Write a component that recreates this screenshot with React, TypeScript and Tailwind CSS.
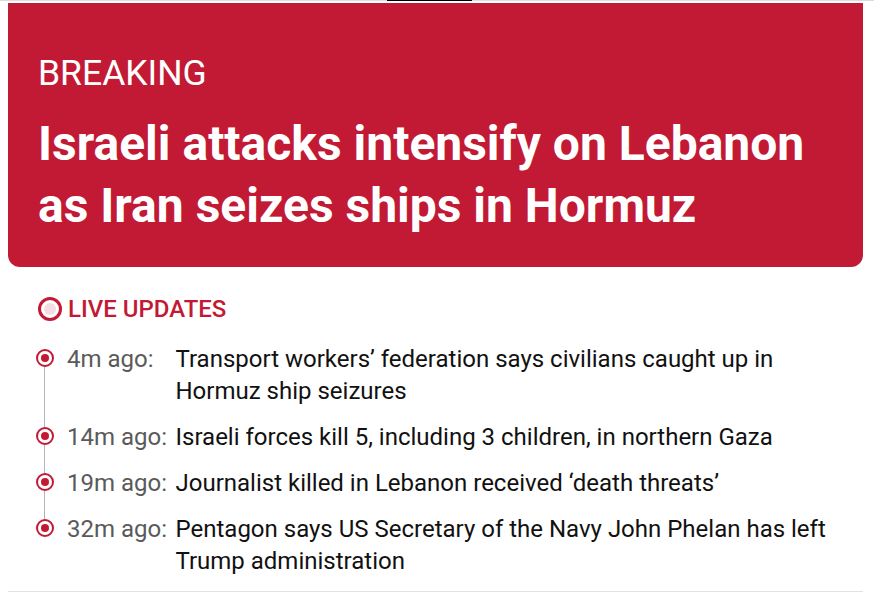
const updates = [
  {
    time: "4m ago:",
    text: "Transport workers’ federation says civilians caught up in Hormuz ship seizures",
  },
  { time: "14m ago:", text: "Israeli forces kill 5, including 3 children, in northern Gaza" },
  { time: "19m ago:", text: "Journalist killed in Lebanon received ‘death threats’" },
  {
    time: "32m ago:",
    text: "Pentagon says US Secretary of the Navy John Phelan has left Trump administration",
  },
];

export default function App() {
  return (
    <div className="min-h-screen bg-white font-['Roboto',sans-serif]">
      {/* top rule */}
      <div className="h-px bg-[#dcdcdc]">
        <div className="ml-[387px] h-px w-[85px] bg-black" />
      </div>

      <div className="ml-2 w-[855px]">
        {/* Breaking banner */}
        <div className="mt-[2px] rounded-b-[12px] bg-[#c21a34] pl-[30px] pr-6 pt-[49px] pb-[30px] text-white">
          <div className="text-[35.5px] leading-[42px]">BREAKING</div>
          <h1 className="mt-[19px] text-[48px] font-bold leading-[62px]">
            Israeli attacks intensify on Lebanon
            <br />
            as Iran seizes ships in Hormuz
          </h1>
        </div>

        {/* Live updates */}
        <div className="border-b border-[#e2e2e2] pl-[30px] pr-4 pt-[30px]">
          <div className="flex h-6 items-center gap-[6px]">
            <span className="flex h-6 w-6 shrink-0 items-center justify-center rounded-full border-[3px] border-[#c21a34]">
              <span className="h-3 w-3 rounded-full bg-[#f3dde1]" />
            </span>
            <span className="text-[24px] font-medium leading-6 text-[#c21a34]">LIVE UPDATES</span>
          </div>

          <ul className="-ml-[2.5px] mt-[22px]">
            {updates.map((u, i) => (
              <li key={u.time} className="flex">
                <div className="flex w-[18px] shrink-0 flex-col items-center">
                  <div className={`h-[6px] w-px shrink-0 ${i === 0 ? "" : "bg-[#b5b5b5]"}`} />
                  <span className="flex h-[18px] w-[18px] shrink-0 items-center justify-center rounded-full border-2 border-[#c21a34] bg-white">
                    <span className="h-2 w-2 rounded-full bg-[#c21a34]" />
                  </span>
                  {i < updates.length - 1 && <div className="w-px flex-1 bg-[#b5b5b5]" />}
                </div>
                <div className="ml-[13.5px] flex flex-1 pb-[14px] text-[24px] leading-8">
                  <span className="w-[108.5px] shrink-0 text-[#5a5a5a]">{u.time}</span>
                  <span className="text-[#111111]">{u.text}</span>
                </div>
              </li>
            ))}
          </ul>
        </div>
      </div>
    </div>
  );
}
